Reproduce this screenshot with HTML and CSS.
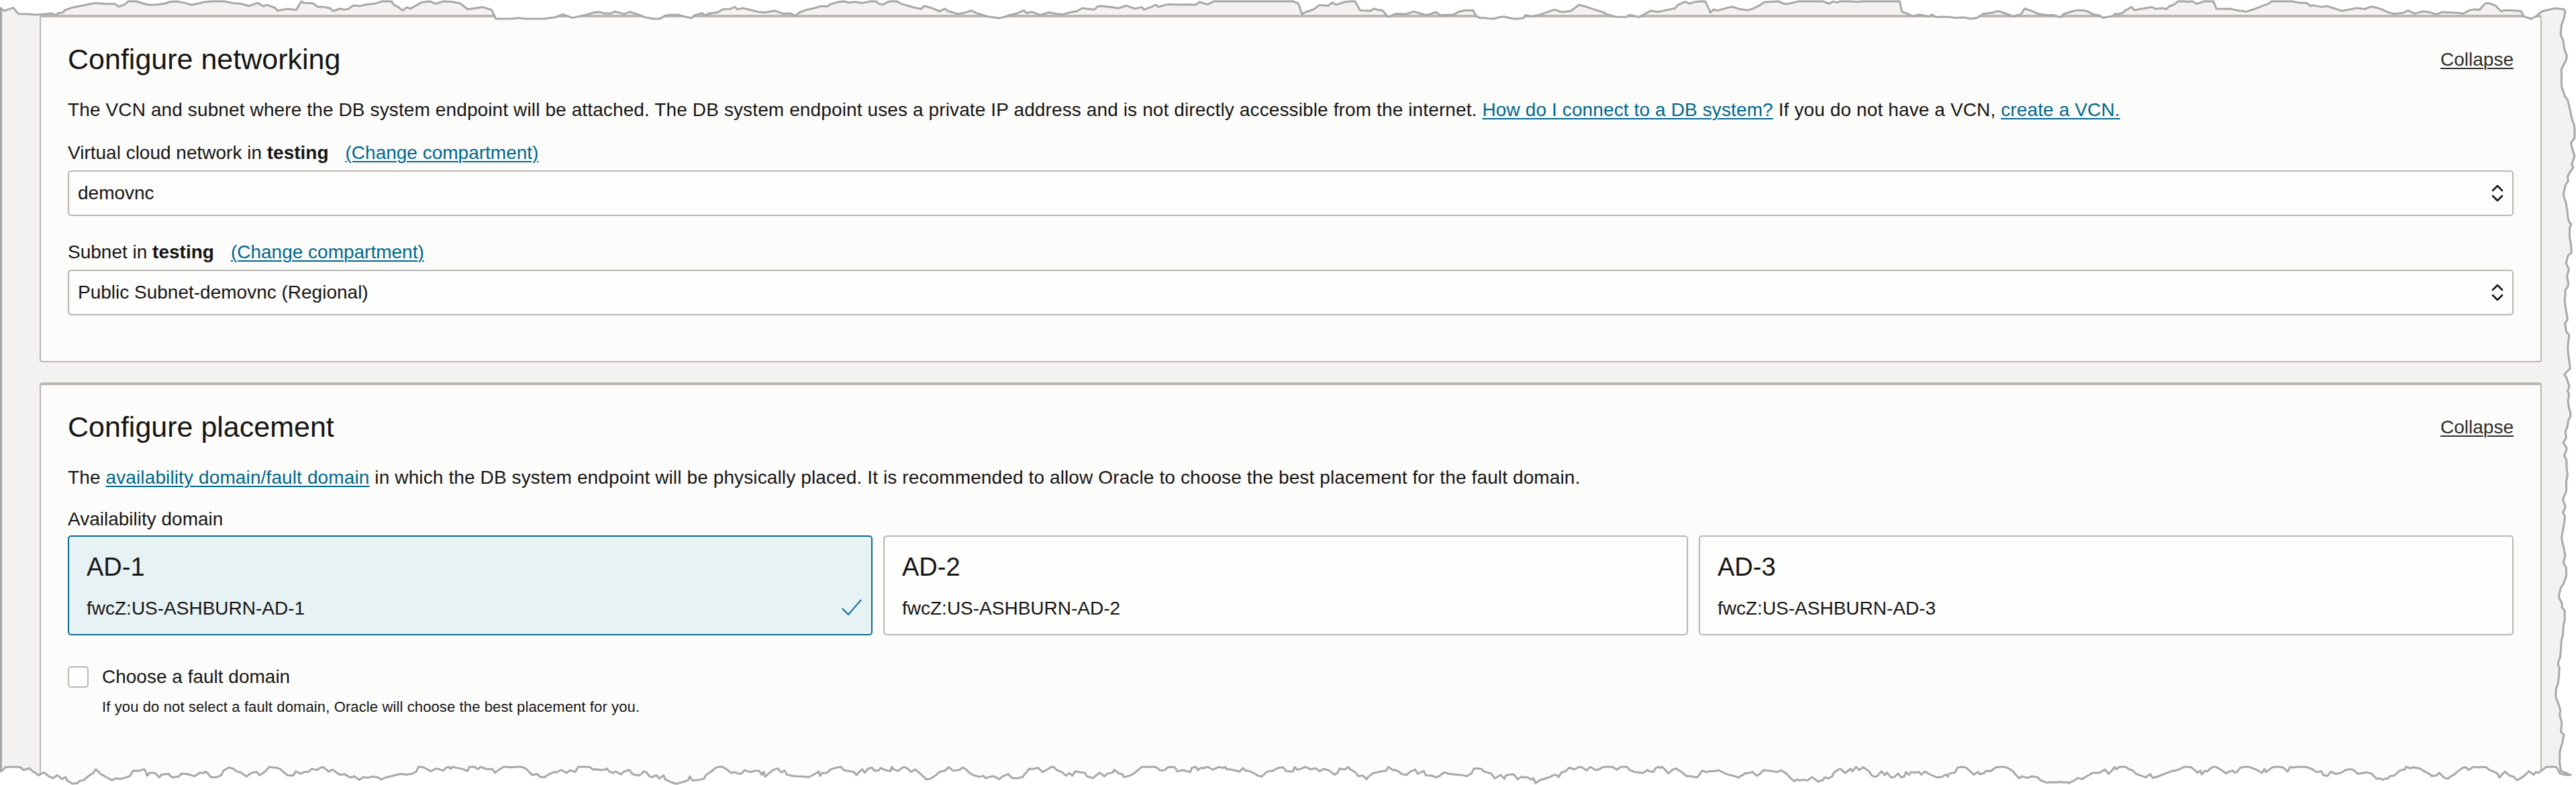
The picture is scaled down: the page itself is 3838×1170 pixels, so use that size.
FILE: index.html
```html
<!DOCTYPE html>
<html lang="en">
<head>
<meta charset="UTF-8">
<meta name="viewport" content="width=device-width, initial-scale=1.0">
<title>Configure networking</title>
<link rel="stylesheet" href="styles.css">
</head>
<body>
<div class="page">

    <section class="panel">
        <div class="panel-head">
            <h2>Configure networking</h2>
            <a class="collapse" href="#">Collapse</a>
        </div>
        <p class="panel-text">The VCN and subnet where the DB system endpoint will be attached. The DB system endpoint uses a private IP address and is not directly accessible from the internet. <a href="#">How do I connect to a DB system?</a> If you do not have a VCN, <a href="#">create a VCN.</a></p>

        <div class="field">
            <div class="field-label">Virtual cloud network in <b>testing</b><a class="compartment" href="#">(Change compartment)</a></div>
            <div class="select">
                <span>demovnc</span>
                <svg class="chevrons" width="18" height="28" viewBox="0 0 18 28"><path d="M2 10 L9 3 L16 10 M2 18 L9 25 L16 18"/></svg>
            </div>
        </div>

        <div class="field">
            <div class="field-label">Subnet in <b>testing</b><a class="compartment" href="#">(Change compartment)</a></div>
            <div class="select">
                <span>Public Subnet-demovnc (Regional)</span>
                <svg class="chevrons" width="18" height="28" viewBox="0 0 18 28"><path d="M2 10 L9 3 L16 10 M2 18 L9 25 L16 18"/></svg>
            </div>
        </div>
    </section>

    <section class="panel panel-last">
        <div class="panel-head">
            <h2>Configure placement</h2>
            <a class="collapse" href="#">Collapse</a>
        </div>
        <p class="panel-text">The <a href="#">availability domain/fault domain</a> in which the DB system endpoint will be physically placed. It is recommended to allow Oracle to choose the best placement for the fault domain.</p>

        <div class="field-label ad-label">Availability domain</div>
        <div class="ad-list">
            <div class="ad-tile selected">
                <div class="ad-name">AD-1</div>
                <div class="ad-id">fwcZ:US-ASHBURN-AD-1</div>
                <svg class="ad-check" width="30" height="26" viewBox="0 0 30 26"><polyline points="1,15 10,24 29,2"/></svg>
            </div>
            <div class="ad-tile">
                <div class="ad-name">AD-2</div>
                <div class="ad-id">fwcZ:US-ASHBURN-AD-2</div>
            </div>
            <div class="ad-tile">
                <div class="ad-name">AD-3</div>
                <div class="ad-id">fwcZ:US-ASHBURN-AD-3</div>
            </div>
        </div>

        <label class="check-row">
            <span class="checkbox"></span>
            <span>Choose a fault domain</span>
        </label>
        <p class="helper">If you do not select a fault domain, Oracle will choose the best placement for you.</p>
    </section>

    <!-- torn paper frame around the screenshot -->
    <svg class="torn" width="3838" height="1170" viewBox="0 0 3838 1170">
        <path id="tornFill" fill="#ffffff" fill-rule="evenodd"/>
        <path id="tornLine" fill="none" stroke="#a8a8a8" stroke-width="3" stroke-linejoin="round"/>
    </svg>
</div>

<script>
    let seed = 7;
    function rand() {
        seed = (seed * 1664525 + 1013904223) % 4294967296;
        return seed / 4294967296;
    }

    function clamp(v, lo, hi) {
        return Math.max(lo, Math.min(hi, v));
    }

    const pts = [];

    // top edge, left to right
    let x = 0, y = 12;
    while (x < 3822) {
        pts.push([x, y]);
        x += 3 + rand() * 12;
        y += (rand() - 0.5) * 10;
        if (rand() < 0.07) y += (rand() - 0.5) * 28;
        y = clamp(y, 2, 28);
    }

    // right edge, top to bottom
    x = 3822; y = 18;
    while (y < 1155) {
        pts.push([x, y]);
        y += 3 + rand() * 12;
        x += (rand() - 0.5) * 9 + (3822 - x) * 0.08;
        x = clamp(x, 3808, 3836);
    }

    // bottom edge, right to left
    x = 3830; y = 1155;
    while (x > 2) {
        pts.push([x, y]);
        x -= 2 + rand() * 7;
        y += (rand() - 0.5) * 13 + (1150 - y) * 0.15;
        y = clamp(y, 1143, 1168);
    }
    pts.push([1.5, y]);
    pts.push([1.5, 12]);

    const inner = "M" + pts.map(p => p[0].toFixed(1) + " " + p[1].toFixed(1)).join(" L") + " Z";
    document.getElementById("tornFill").setAttribute("d", "M-10 -10 H3850 V1180 H-10 Z " + inner);
    document.getElementById("tornLine").setAttribute("d", inner);
</script>
</body>
</html>
```

FILE: styles.css
```css
* {
    box-sizing: border-box;
}

body {
    margin: 0;
    font-family: "Liberation Sans", Arial, sans-serif;
    color: #161513;
    background-color: #ffffff;
    overflow: hidden;
}

a {
    color: #00688c;
    text-decoration: underline;
    text-decoration-thickness: 2px;
    text-underline-offset: 3px;
}

.page {
    position: relative;
    height: 1170px;
    padding: 22px 51px 0 59px;
    background-color: #f3f2f1;
    overflow: hidden;
}

.panel {
    background-color: #fcfcfb;
    border: 2px solid #bcb6b0;
    border-top-width: 4px;
    border-radius: 4px;
    padding: 37px 40px 68px;
}

.panel + .panel {
    margin-top: 30px;
}

.panel-last {
    padding-bottom: 140px;
}

.panel-head {
    display: flex;
    justify-content: space-between;
    align-items: flex-start;
}

.panel-head h2 {
    margin: 0;
    font-size: 43px;
    font-weight: normal;
    line-height: 50px;
}

.collapse {
    margin-top: 9px;
    font-size: 28px;
    line-height: 34px;
    color: #312d2a;
}

.panel-text {
    margin: 34px 0 0;
    font-size: 28px;
    line-height: 34px;
    letter-spacing: 0.12px;
}

.field {
    margin-top: 30px;
}

.field + .field {
    margin-top: 37px;
}

.field-label {
    font-size: 28px;
    line-height: 34px;
    margin-bottom: 9px;
}

.compartment {
    margin-left: 25px;
}

.select {
    display: flex;
    align-items: center;
    justify-content: space-between;
    height: 68px;
    padding: 0 13px;
    border: 2px solid #bcb6b0;
    border-radius: 5px;
    background-color: #fdfdfc;
    font-size: 28px;
}

.chevrons path {
    fill: none;
    stroke: #161513;
    stroke-width: 2.6;
    stroke-linecap: round;
    stroke-linejoin: round;
}

.ad-label {
    margin-top: 28px;
    margin-bottom: 7px;
}

.ad-list {
    display: grid;
    grid-template-columns: 1199px 1199px 1fr;
    gap: 16px;
}

.ad-tile {
    position: relative;
    height: 149px;
    padding: 23px 26px 0;
    border: 2px solid #bcb6b0;
    border-radius: 5px;
    background-color: #fdfdfc;
}

.ad-tile.selected {
    border-color: #0d6a8c;
    background-color: #e7f2f5;
}

.ad-name {
    font-size: 38px;
    line-height: 44px;
    margin-bottom: 23px;
}

.ad-id {
    font-size: 28px;
    line-height: 34px;
}

.ad-check {
    position: absolute;
    right: 14px;
    bottom: 27px;
}

.ad-check polyline {
    fill: none;
    stroke: #0d6a8c;
    stroke-width: 2;
}

.check-row {
    display: flex;
    align-items: center;
    gap: 20px;
    margin-top: 45px;
    font-size: 28px;
    line-height: 34px;
}

.checkbox {
    width: 31px;
    height: 32px;
    border: 2px solid #bcb6b0;
    border-radius: 5px;
    background-color: #ffffff;
}

.helper {
    margin: 14px 0 0 51px;
    font-size: 22px;
    line-height: 28px;
    letter-spacing: 0.12px;
}

.torn {
    position: absolute;
    left: 0;
    top: 0;
    pointer-events: none;
}
```
